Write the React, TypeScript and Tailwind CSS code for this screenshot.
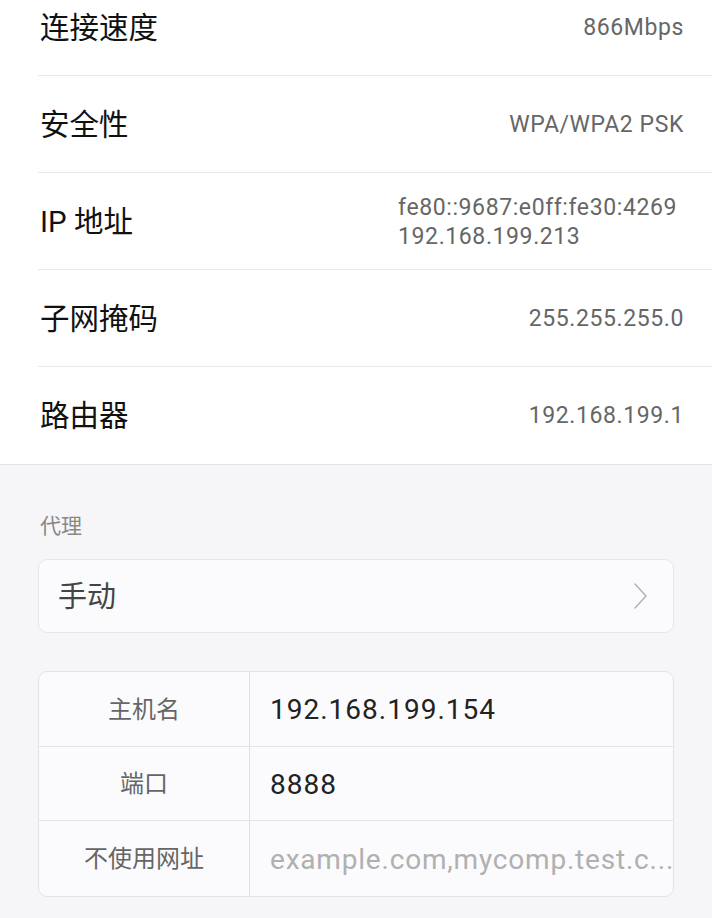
import React from "react";

const FONT = { fontFamily: 'Roboto, "Noto Sans CJK SC", sans-serif' };

function InfoRow({ label, value, first, last }: { label: string; value: React.ReactNode; first?: boolean; last?: boolean }) {
  return (
    <div className={`ml-[38px] flex h-[97px] items-center justify-between pr-[28px] pt-[2px] ${first ? "-mt-[21px]" : ""} ${last ? "" : "border-b border-[#e9e9e9]"}`}>
      <span className="pl-[2px] text-[29.5px] text-[#111]">{label}</span>
      <span className="text-[23px] tracking-[0.6px] text-[#666]">{value}</span>
    </div>
  );
}

export default function App() {
  return (
    <div className="h-[918px] w-[712px] overflow-hidden bg-[#f6f6f8]" style={FONT}>
      <div className="overflow-hidden border-b border-[#e4e4e6] bg-white">
        <InfoRow first label="连接速度" value="866Mbps" />
        <InfoRow label="安全性" value="WPA/WPA2 PSK" />
        <InfoRow
          label="IP 地址"
          value={
            <span className="mr-[7px] flex flex-col leading-[29px]">
              <span>fe80::9687:e0ff:fe30:4269</span>
              <span>192.168.199.213</span>
            </span>
          }
        />
        <InfoRow label="子网掩码" value="255.255.255.0" />
        <InfoRow last label="路由器" value="192.168.199.1" />
      </div>

      <div className="px-[38px]">
        <div className="pl-[2px] pt-[46px] text-[21px] leading-[30px] text-[#888]">代理</div>
        <div className="mt-[18px] flex h-[74px] items-center justify-between rounded-[9px] border border-[#e6e6e8] bg-[#fbfbfd] pl-[19px] pr-[24px]">
          <span className="pt-[3px] text-[29px] text-[#444]">手动</span>
          <svg width="16" height="28" viewBox="0 0 16 28" fill="none">
            <path d="M2 2 L13 14 L2 26" stroke="#b5b5b5" strokeWidth="1.6" strokeLinecap="round" strokeLinejoin="round" />
          </svg>
        </div>

        <div className="mt-[38px] overflow-hidden rounded-[9px] border border-[#e2e2e4] bg-[#fbfbfd]">
          {[
            { k: "主机名", v: "192.168.199.154", ph: false },
            { k: "端口", v: "8888", ph: false },
            { k: "不使用网址", v: "example.com,mycomp.test.c...", ph: true },
          ].map((r, i) => (
            <div key={r.k} className={`flex h-[74.5px] ${i < 2 ? "border-b border-[#e4e4e6]" : ""}`}>
              <div className="flex w-[211px] items-center justify-center border-r border-[#e0e0e2] pt-[2px] text-[24px] text-[#666]">
                {r.k}
              </div>
              <div className={`flex flex-1 items-center overflow-hidden whitespace-nowrap pl-[20px] pt-[3px] text-[28px] ${r.ph ? "tracking-[0.8px] text-[#b0b0b0]" : "tracking-[1px] text-[#222]"}`}>
                {r.v}
              </div>
            </div>
          ))}
        </div>
      </div>
    </div>
  );
}
